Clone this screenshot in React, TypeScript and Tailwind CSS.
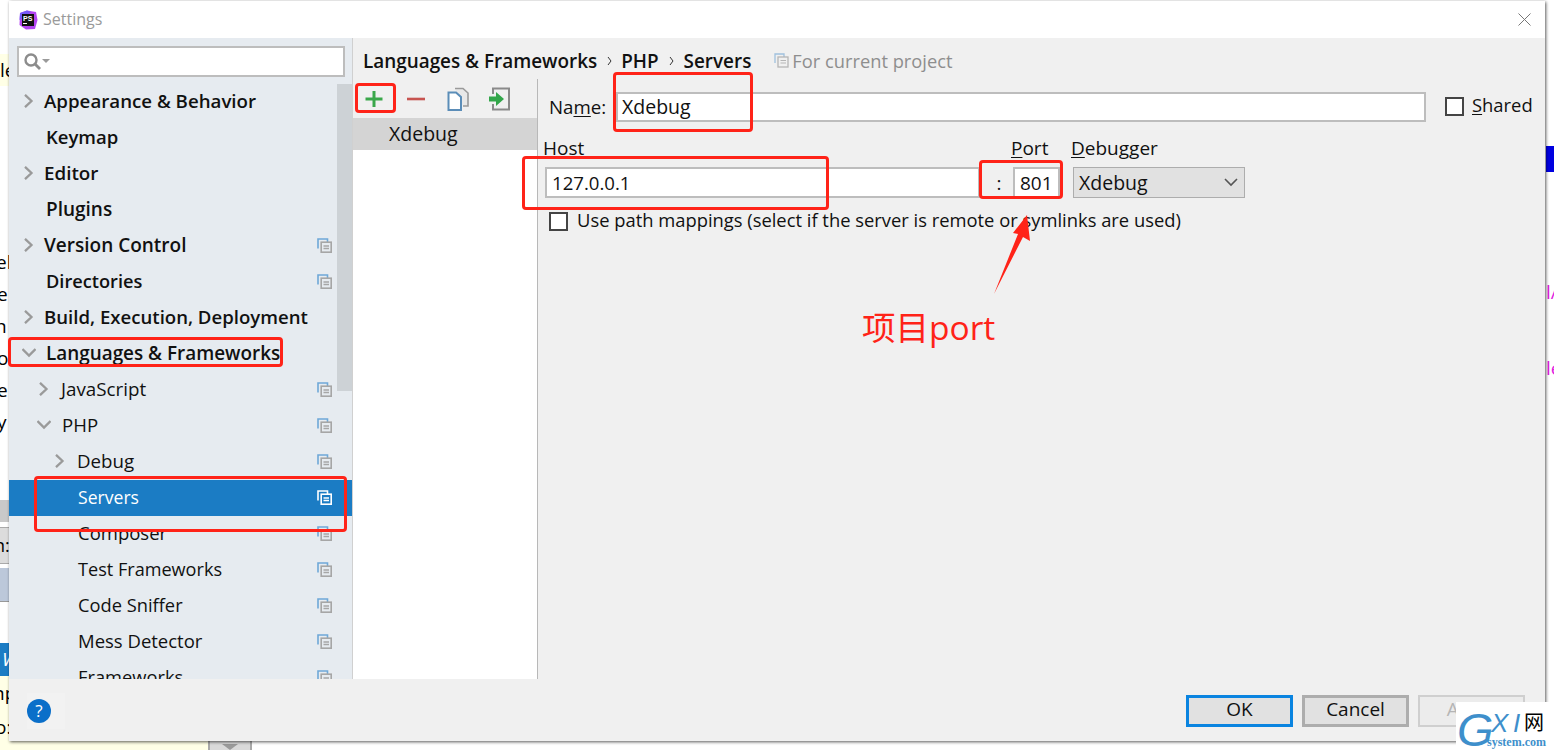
import React from "react";

const font = { fontFamily: '"Open Sans", "Noto Sans", sans-serif' };

function Chevron({ open, className = "" }: { open?: boolean; className?: string }) {
  return (
    <svg width="14" height="14" viewBox="0 0 14 14" className={className} fill="none" stroke="#9a9a9a" strokeWidth="2.3">
      {open ? <path d="M0.500 3 L7 9.500 L13.500 3" /> : <path d="M3 0.800 L9.500 7 L3 13.200" />}
    </svg>
  );
}

function CopyIcon({ active }: { active?: boolean }) {
  const a = active ? "#ffffff" : "#6fa8d8";
  const b = active ? "#ffffff" : "#a6a6a6";
  return (
    <svg width="15" height="15" viewBox="0 0 15 15" fill="none" className="shrink-0">
      <path d="M1 10.500 V1 H10.500 V4" stroke={a} strokeWidth="1.600" />
      <rect x="4.200" y="4.200" width="10" height="10" stroke={b} strokeWidth="1.600" fill={active ? "#1b7cc4" : "#e6ebf0"} />
      <path d="M6.500 8 H12 M6.500 10.500 H12" stroke={b} strokeWidth="1.300" />
    </svg>
  );
}

type Row = { label: string; rowCls: string; labelCls: string; bold?: boolean; chev?: "open" | "closed"; copy?: boolean; active?: boolean };

const rows: Row[] = [
  { label: "Appearance & Behavior", rowCls: "pl-[13px]", labelCls: "ml-[8px] text-[18.7px]", bold: true, chev: "closed" },
  { label: "Keymap", rowCls: "pl-[37px]", labelCls: "text-[18.5px]", bold: true },
  { label: "Editor", rowCls: "pl-[13px]", labelCls: "ml-[8px] text-[18.8px]", bold: true, chev: "closed" },
  { label: "Plugins", rowCls: "pl-[37px]", labelCls: "text-[19px]", bold: true },
  { label: "Version Control", rowCls: "pl-[13px]", labelCls: "ml-[8px] text-[19px]", bold: true, chev: "closed", copy: true },
  { label: "Directories", rowCls: "pl-[37px]", labelCls: "text-[18.2px]", bold: true, copy: true },
  { label: "Build, Execution, Deployment", rowCls: "pl-[13px]", labelCls: "ml-[8px] text-[18.6px]", bold: true, chev: "closed" },
  { label: "Languages & Frameworks", rowCls: "pl-[13px]", labelCls: "ml-[10px] text-[18.9px]", bold: true, chev: "open" },
  { label: "JavaScript", rowCls: "pl-[28px]", labelCls: "ml-[10px] text-[18.8px]", chev: "closed", copy: true },
  { label: "PHP", rowCls: "pl-[28px]", labelCls: "ml-[11px] text-[18.6px]", chev: "open", copy: true },
  { label: "Debug", rowCls: "pl-[44px]", labelCls: "ml-[10px] text-[18.7px]", chev: "closed", copy: true },
  { label: "Servers", rowCls: "pl-[69px]", labelCls: "text-[17.6px]", copy: true, active: true },
  { label: "Composer", rowCls: "pl-[69px]", labelCls: "text-[18.5px]", copy: true },
  { label: "Test Frameworks", rowCls: "pl-[69px]", labelCls: "text-[18.1px]", copy: true },
  { label: "Code Sniffer", rowCls: "pl-[69px]", labelCls: "text-[18.3px]", copy: true },
  { label: "Mess Detector", rowCls: "pl-[69px]", labelCls: "text-[18.5px]", copy: true },
  { label: "Frameworks", rowCls: "pl-[69px]", labelCls: "text-[18.300px]", copy: true },
];

function TreeRow({ r }: { r: Row }) {
  return (
    <div
      className={`h-[36px] shrink-0 flex items-center pr-[20px] pb-[2px] ${r.rowCls} ${r.active ? "bg-[#1b7cc4] text-white" : "text-[#111111]"} ${r.bold ? "font-semibold" : ""}`}
    >
      {r.chev && <Chevron open={r.chev === "open"} className="shrink-0" />}
      <span className={`flex-1 whitespace-nowrap ${r.labelCls}`}>{r.label}</span>
      {r.copy && <CopyIcon active={r.active} />}
    </div>
  );
}

function Box({ className = "" }: { className?: string }) {
  return <div className={`absolute border-[3px] border-[#ff2318] rounded-[4px] ${className}`} />;
}

function Frag({ className, children }: { className: string; children?: React.ReactNode }) {
  return <div className={`absolute whitespace-nowrap text-[19px] leading-[24px] ${className}`}>{children}</div>;
}

function Sep({ className = "" }: { className?: string }) {
  return (
    <svg width="5" height="10" viewBox="0 0 5 10" fill="none" stroke="#333" strokeWidth="1" className={`mt-[1px] ${className}`}>
      <path d="M1 1 L4 5 L1 9" />
    </svg>
  );
}

function CopyIconGray() {
  return (
    <svg width="15" height="15" viewBox="0 0 15 15" fill="none">
      <path d="M1 10 V1 H10 V4" stroke="#9fc0dd" strokeWidth="1.300" />
      <rect x="4" y="4" width="10" height="10" stroke="#b5b5b5" strokeWidth="1.300" />
      <path d="M6.500 7.500 H12 M6.500 10 H12" stroke="#b5b5b5" strokeWidth="1.100" />
    </svg>
  );
}

export default function App() {
  return (
    <div className="relative w-[1554px] h-[750px] overflow-hidden bg-white text-[19px] leading-[24px]" style={font}>
      {/* desktop behind the dialog */}
      <Frag className="left-0 top-[54px] w-[9px] h-[32px] bg-[#ffffe6] text-black overflow-hidden pt-[4px]">le</Frag>
      <Frag className="left-[-4px] top-[250px] w-[13px] overflow-hidden text-black">el</Frag>
      <Frag className="left-[-3px] top-[282px] w-[12px] overflow-hidden text-black">e</Frag>
      <Frag className="left-[-5px] top-[314px] w-[14px] overflow-hidden text-black">n</Frag>
      <Frag className="left-[-3px] top-[346px] w-[12px] overflow-hidden text-black">o</Frag>
      <Frag className="left-[-3px] top-[378px] w-[12px] overflow-hidden text-black">e</Frag>
      <Frag className="left-[-3px] top-[410px] w-[12px] overflow-hidden text-black">y</Frag>
      <div className="absolute left-0 top-[500px] w-[9px] h-[22px] bg-[#c9c9c9]" />
      <div className="absolute left-0 top-[527px] w-[9px] h-[37px] bg-[#dcdcdc] border-y border-[#aaa] overflow-hidden text-[18px] leading-[34px] text-black">
        <span className="ml-[-6px]">n:</span>
      </div>
      <div className="absolute left-0 top-[568px] w-[9px] h-[34px] bg-[#bcc8da] border-b border-[#999]" />
      <div className="absolute left-0 top-[643px] w-[9px] h-[33px] bg-[#1b7cc4] overflow-hidden text-white italic leading-[33px]">
        <span className="ml-[2px]">W</span>
      </div>
      <div className="absolute left-0 top-[676px] w-[208px] h-[74px] bg-[#ffffe6] overflow-hidden text-black">
        <div className="ml-[-7px] mt-[5px] w-[16px] overflow-hidden">np</div>
        <div className="ml-[-5px] mt-[10px] w-[14px] overflow-hidden">o:</div>
      </div>
      <div className="absolute left-[208px] top-[741px] w-[44px] h-[9px] bg-[#d9d9d9] border-x-2 border-[#a8a8a8] flex justify-center">
        <svg width="16" height="9" viewBox="0 0 16 9"><path d="M0 3 H16 L8 9 Z" fill="#9a9a9a" /></svg>
      </div>
      <div className="absolute left-[1546px] top-[146px] w-[8px] h-[26px] bg-[#0000e0]" />
      <Frag className="left-[1546px] top-[280px] text-[#e020e0]">l/</Frag>
      <Frag className="left-[1546px] top-[356px] text-[#e020e0]">le</Frag>

      {/* dialog */}
      <div className="absolute left-[9px] top-[1px] w-[1536px] h-[740px] flex flex-col bg-[#f0f0f0] shadow-[1px_1px_3px_rgba(0,0,0,0.65)]">
        <div className="h-[37px] shrink-0 bg-white flex items-center pl-[9px] pr-[14px]">
          <svg width="20" height="20" viewBox="0 0 20 20" className="mr-[5px]">
            <path d="M2 3 L9 0.500 L18 2 L19.500 10 L17 19 L8 19.500 L1.500 15 Z" fill="#b345f1" />
            <path d="M1.500 10 L2 3 L9 0.500 L13 2 Z" fill="#765af8" />
            <rect x="4" y="4" width="12" height="12" fill="#111" />
            <text x="5" y="11" fontSize="7" fontWeight="700" fill="#fff" fontFamily="Liberation Sans">PS</text>
            <rect x="5" y="13" width="4" height="1" fill="#fff" />
          </svg>
          <span className="text-[16px] text-[#9a9a9a] flex-1 mt-[-2px]">Settings</span>
          <svg width="13" height="13" viewBox="0 0 13 13" stroke="#777" strokeWidth="1" className="mt-[-1px]">
            <path d="M0.500 0.500 L12.500 12.500 M12.500 0.500 L0.500 12.500" />
          </svg>
        </div>
        <div className="flex-1 flex min-h-0">
          {/* sidebar */}
          <div className="w-[343px] shrink-0 bg-[#e6ebf0] flex flex-col relative overflow-hidden">
            <div className="h-[46px] shrink-0 pt-[8px] pl-[8px] pr-[7px]">
              <div className="h-[31px] bg-white border-2 border-[#bdbdbd] flex items-center pl-[4px]">
                <svg width="28" height="20" viewBox="0 0 28 20" fill="none" stroke="#8c8c8c">
                  <circle cx="8" cy="8" r="5.500" strokeWidth="2.400" />
                  <path d="M12 12 L17 17" strokeWidth="2.800" />
                  <path d="M19 7 H27 L23 11 Z" fill="#9a9a9a" stroke="none" />
                </svg>
              </div>
            </div>
            <div className="flex-1 flex flex-col min-h-0 overflow-hidden">
              {rows.map((r) => (
                <TreeRow key={r.label} r={r} />
              ))}
            </div>
            <div className="absolute right-0 top-[46px] w-[15px] h-[307px] bg-[#cdd2d6]" />
          </div>
          {/* content */}
          <div className="flex-1 flex flex-col min-w-0 border-l border-[#d0d0d0]">
            <div className="h-[41px] shrink-0 flex items-center pl-[10px] pt-[4px] font-semibold text-[18.900px] text-[#111111] whitespace-nowrap">
              <span>Languages &amp; Frameworks</span>
              <Sep className="ml-[10px] mr-[9px]" />
              <span>PHP</span>
              <Sep className="ml-[10px] mr-[10px]" />
              <span>Servers</span>
              <span className="ml-[23px] flex items-center font-normal text-[18.300px] text-[#8e8e8e]">
                <CopyIconGray />
                <span className="ml-[3px]">For current project</span>
              </span>
            </div>
            <div className="flex-1 flex min-h-0">
              {/* server list */}
              <div className="w-[185px] shrink-0 bg-white flex flex-col border-r border-[#b8b8b8]">
                <div className="h-[39px] shrink-0 bg-[#f0f0f0] flex items-center pl-[10px] gap-[20px]">
                  <svg width="22" height="22" viewBox="0 0 22 22" stroke="#3aa74a" strokeWidth="3">
                    <path d="M11 3 V19 M2.500 11 H19.500" />
                  </svg>
                  <svg width="22" height="22" viewBox="0 0 22 22" stroke="#c75450" strokeWidth="2.600">
                    <path d="M2 11 H20" />
                  </svg>
                  <svg width="22" height="24" viewBox="0 0 22 24" fill="none">
                    <path d="M8 1.500 H16 L21 6 V19 H16" stroke="#9a9a9a" strokeWidth="1.600" fill="#e8e8e8" />
                    <path d="M1.500 5.500 H9 L14 10 V23 H1.500 Z" stroke="#5b8db8" strokeWidth="2" fill="#fff" />
                  </svg>
                  <svg width="22" height="24" viewBox="0 0 22 24" fill="none">
                    <path d="M4 7 V1.500 H20 V22.500 H4 V17" stroke="#8a8a8a" strokeWidth="2" />
                    <path d="M0 9.500 H7 V5 L15 12 L7 19 V14.500 H0 Z" fill="#32a64a" />
                  </svg>
                </div>
                <div className="h-[32px] shrink-0 bg-[#d4d4d4] flex items-center pl-[36px] text-[19.500px] text-[#111111]">Xdebug</div>
              </div>
              {/* form */}
              <div className="flex-1 min-w-0 text-[#111111]">
                <div className="h-[30px] mt-[13px] flex items-center">
                  <span className="ml-[11px] w-[67px] whitespace-nowrap text-[18.700px]">
                    Na<span className="underline underline-offset-2">m</span>e:
                  </span>
                  <div className="w-[810px] h-[30px] bg-white border-2 border-[#bdbdbd] flex items-center pl-[4px] text-[19.500px]">Xdebug</div>
                  <div className="ml-[19px] mb-[2px] w-[19px] h-[19px] bg-white border-2 border-[#444] shrink-0" />
                  <span className="ml-[8px] mb-[4px] text-[18.400px]"><span className="underline underline-offset-2">S</span>hared</span>
                </div>
                <div className="h-[24px] mt-[14px] flex items-center">
                  <span className="ml-[5px] w-[468px]">Host</span>
                  <span className="w-[60px]"><span className="underline underline-offset-2">P</span>ort</span>
                  <span><span className="underline underline-offset-2">D</span>ebugger</span>
                </div>
                <div className="h-[31px] mt-[7px] flex items-center">
                  <div className="ml-[7px] w-[435px] h-[31px] bg-white border-2 border-[#bdbdbd] flex items-center pl-[5px] text-[18.600px]">127.0.0.1</div>
                  <span className="w-[33px] text-center pl-[5px]">:</span>
                  <div className="w-[47px] h-[31px] bg-white border-2 border-[#bdbdbd] flex items-center pl-[5px]">801</div>
                  <div className="ml-[13px] w-[172px] h-[31px] bg-[#e1e1e1] border border-[#adadad] flex items-center pl-[5px] pr-[6px] justify-between text-[19.500px]">
                    <span>Xdebug</span>
                    <svg width="14" height="9" viewBox="0 0 14 9" fill="none" stroke="#555" strokeWidth="1.600">
                      <path d="M1 1 L7 7 L13 1" />
                    </svg>
                  </div>
                </div>
                <div className="h-[24px] mt-[11px] flex items-center">
                  <div className="ml-[11px] w-[19px] h-[19px] bg-white border-2 border-[#444] shrink-0" />
                  <span className="ml-[9px] mb-[2px] whitespace-nowrap text-[18.360px]">Use path mappings (select if the server is remote or symlinks are used)</span>
                </div>
              </div>
            </div>
          </div>
        </div>
        <div className="h-[62px] shrink-0 bg-[#f0f0f0] flex items-center pl-[18px] pr-[20px]">
          <div className="w-[38px] h-[36px] mt-[2px] bg-[#f2f2f2] flex items-center">
            <div className="w-[24px] h-[24px] rounded-full bg-[#0b6fc9] text-white flex items-center justify-center text-[17px]">?</div>
          </div>
          <div className="flex-1" />
          <div className="flex gap-[9px] mt-[2px]">
            <div className="w-[107px] h-[32px] pb-[4px] bg-[#e1e1e1] border-[3px] border-[#0a84e0] flex items-center justify-center text-[#111111]">OK</div>
            <div className="w-[107px] h-[32px] pb-[4px] bg-[#e1e1e1] border-[3px] border-[#adadad] flex items-center justify-center text-[#111111]">Cancel</div>
            <div className="w-[107px] h-[32px] pb-[4px] bg-[#ececec] border-[2px] border-[#cfcfcf] flex items-center justify-center text-[#b5b5b5]">Apply</div>
          </div>
        </div>
      </div>

      {/* annotations */}
      <Box className="left-[355px] top-[83px] w-[41px] h-[30px]" />
      <Box className="left-[613px] top-[72px] w-[140px] h-[60px]" />
      <Box className="left-[522px] top-[156px] w-[307px] h-[54px]" />
      <Box className="left-[979px] top-[160px] w-[84px] h-[39px]" />
      <Box className="left-[8px] top-[337px] w-[275px] h-[30px]" />
      <Box className="left-[34px] top-[476px] w-[313px] h-[56px]" />
      <svg className="absolute left-[990px] top-[212px]" width="44" height="84" viewBox="0 0 44 84">
        <path d="M4 82 L28 22 L23 21 L37 3 L40 29 L33 25 Z" fill="#ff2318" />
      </svg>
      <div
        className="absolute left-[862px] top-[305px] text-[33.500px] leading-[44px] text-[#ff2318] whitespace-nowrap"
        style={{ fontFamily: '"Open Sans", "Noto Sans CJK SC", sans-serif' }}
      >
        项目port
      </div>

      {/* watermark */}
      <div className="absolute left-[1456px] top-[702px] w-[98px] h-[48px] bg-white">
        <span className="absolute left-[1px] top-[11px] text-[47px] leading-[34px] italic text-[#3e8fcb]" style={{ fontFamily: '"Liberation Sans", sans-serif' }}>G</span>
        <span className="absolute left-[35px] top-[10px] text-[26px] leading-[22px] italic text-[#3e8fcb]" style={{ fontFamily: '"Liberation Sans", sans-serif' }}>X</span>
        <span className="absolute left-[57px] top-[10px] text-[26px] leading-[22px] italic text-[#3e8fcb]" style={{ fontFamily: '"Liberation Sans", sans-serif' }}>I</span>
        <span className="absolute left-[68px] top-[8px] text-[20px] leading-[24px] text-black" style={{ fontFamily: '"Noto Sans CJK SC", sans-serif' }}>网</span>
        <span className="absolute left-[31px] top-[34px] text-[12px] leading-[12px] font-bold text-[#3e8fcb]" style={{ fontFamily: '"Liberation Serif", serif' }}>system.com</span>
      </div>
    </div>
  );
}
